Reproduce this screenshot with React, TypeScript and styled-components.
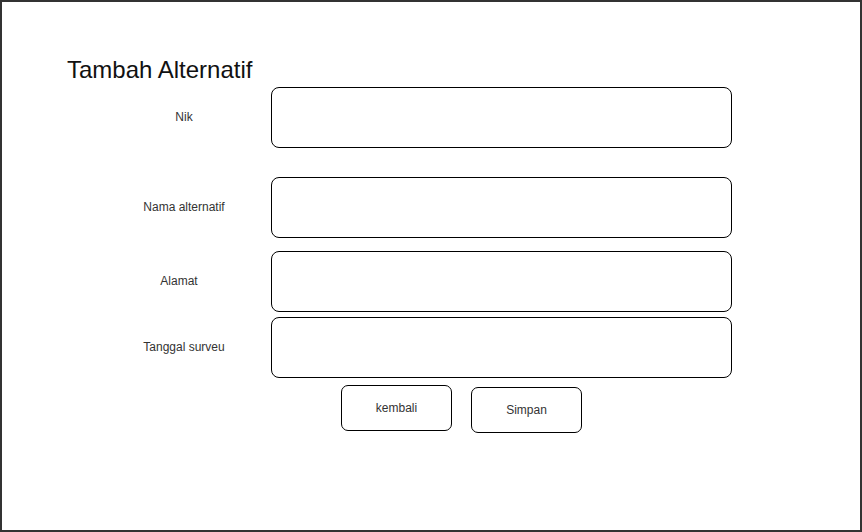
import React from "react";
import styled, { createGlobalStyle } from "styled-components";

const GlobalStyle = createGlobalStyle`
  html, body { margin: 0; padding: 0; background: #ffffff; }
  body { font-family: "Liberation Sans", Arial, Helvetica, sans-serif; }
  * { box-sizing: border-box; }
`;

const Frame = styled.div`
  width: 862px;
  height: 532px;
  border: 2px solid #333333;
  background: #ffffff;
  padding: 54px 0 0 65px;
`;

const Title = styled.h1`
  margin: 0;
  font-size: 24px;
  line-height: 28px;
  font-weight: 400;
  color: #111111;
`;

const Form = styled.div`
  display: flex;
  flex-direction: column;
  margin-top: 3px;
  padding-left: 57px;
`;

const Row = styled.div<{ $gap: number }>`
  display: grid;
  grid-template-columns: 120px 461px;
  column-gap: 27px;
  align-items: center;
  margin-top: ${(p) => p.$gap}px;
`;

const Label = styled.label<{ $shift?: number }>`
  text-align: center;
  font-size: 12px;
  color: #333333;
  transform: translate(${(p) => p.$shift ?? 0}px, -1px);
`;

const Field = styled.div`
  height: 61px;
  border: 1px solid #000000;
  border-radius: 8px;
  background: #ffffff;
`;

const Actions = styled.div`
  grid-column: 2;
  display: flex;
  align-items: flex-start;
  gap: 19px;
  padding-left: 70px;
`;

const Button = styled.button<{ $drop?: number }>`
  width: 111px;
  height: 46px;
  margin-top: ${(p) => p.$drop ?? 0}px;
  border: 1px solid #000000;
  border-radius: 7px;
  background: #ffffff;
  font-family: "Liberation Sans", Arial, sans-serif;
  font-size: 12px;
  color: #333333;
  padding: 0;
  cursor: pointer;
`;

const fields = [
  { label: "Nik", gap: 0, shift: 0 },
  { label: "Nama alternatif", gap: 29, shift: 0 },
  { label: "Alamat", gap: 13, shift: -5 },
  { label: "Tanggal surveu", gap: 5, shift: 0 },
];

export default function App() {
  return (
    <>
      <GlobalStyle />
      <Frame>
        <Title>Tambah Alternatif</Title>
        <Form>
          {fields.map((f) => (
            <Row key={f.label} $gap={f.gap}>
              <Label $shift={f.shift}>{f.label}</Label>
              <Field />
            </Row>
          ))}
          <Row $gap={7}>
            <Actions>
              <Button>kembali</Button>
              <Button $drop={2}>Simpan</Button>
            </Actions>
          </Row>
        </Form>
      </Frame>
    </>
  );
}
